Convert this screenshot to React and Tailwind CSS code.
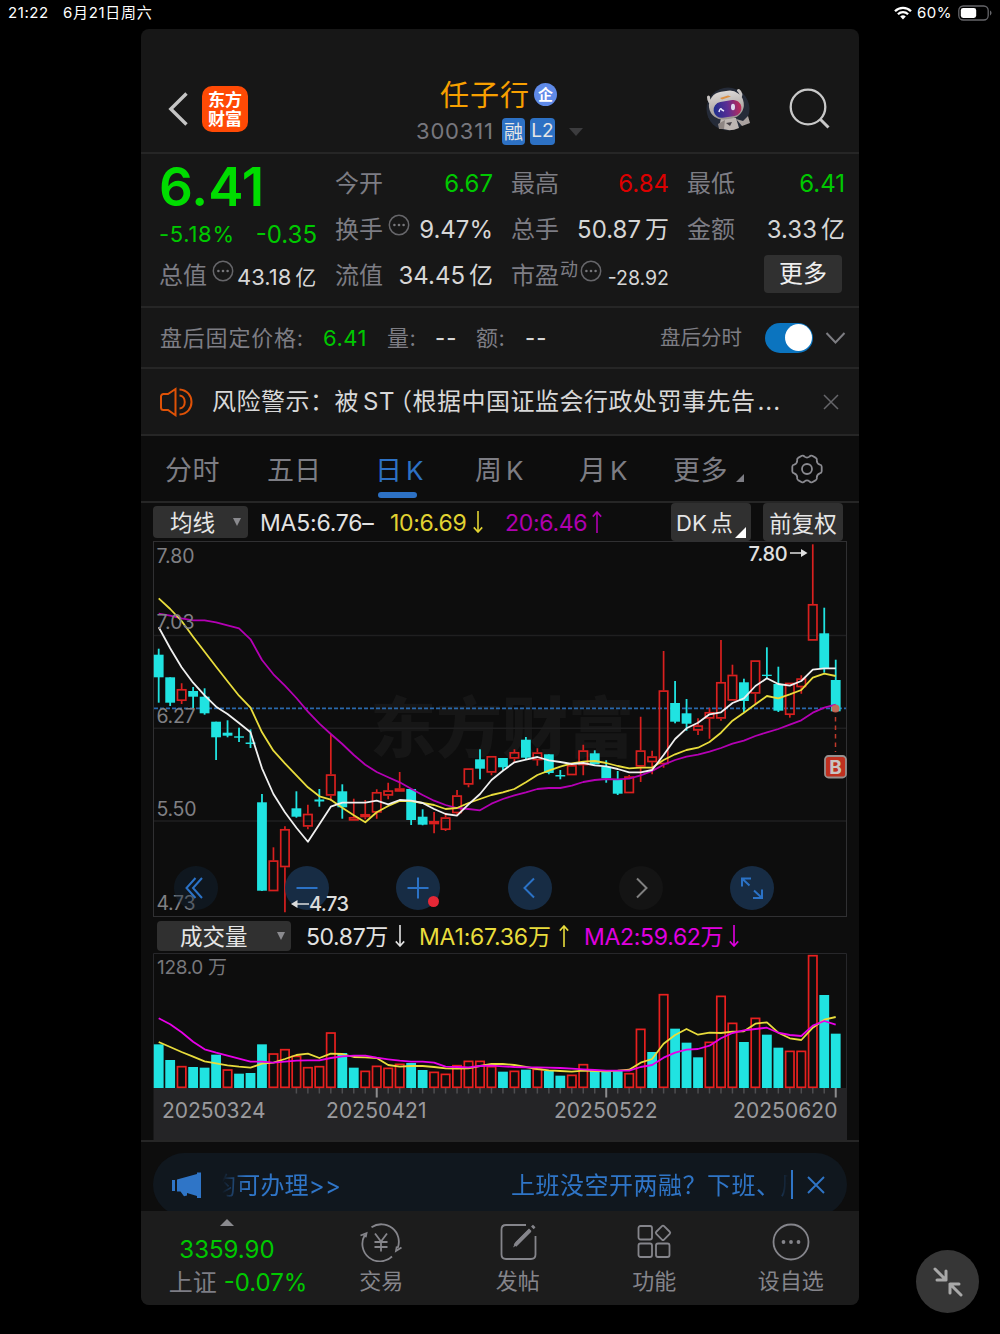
import clsx from "clsx";

const STEP = 11.475;
const xAt = (i) => 158.7 + i * STEP;

// [high, bodyTop, bodyBottom, low, rising]
const candles = [
  [648.7, 654.7, 677.3, 702.7, 0], [677.3, 677.3, 702.7, 706, 0], [683.3, 689, 701, 704, 1],
  [687, 691, 696.7, 708, 0], [688.3, 696.7, 713.3, 714.7, 0], [721.7, 721.7, 737.3, 760, 0],
  [720.3, 732.7, 735.7, 737.3, 0], [727.7, 736.3, 737.7, 742, 0], [729.3, 742.5, 744, 748, 0],
  [794, 802.3, 890.7, 891, 0], [847.3, 860.3, 891.3, 891.3, 1], [826.3, 829, 867.3, 912.3, 1],
  [791.3, 808.3, 816.7, 817.7, 0], [804.7, 813.7, 826.7, 829.3, 1], [789, 799.5, 801.5, 806.7, 0],
  [734.3, 774.3, 795.7, 801, 1], [784.3, 791.3, 807.3, 818.7, 0], [798.7, 817, 820.7, 820.7, 1],
  [800, 814, 817.3, 819.3, 1], [789.3, 792, 812.7, 818.7, 1], [782.7, 790.3, 795.7, 799.3, 1],
  [772, 788.3, 791.7, 791.7, 1], [789, 789, 820, 825, 0], [809.3, 816.7, 824.7, 825.3, 0],
  [812, 821, 824.3, 833.3, 1], [812.7, 817.3, 830, 831, 1], [790, 795.3, 813.3, 815.7, 1],
  [768.3, 768.3, 784.7, 787.3, 1], [749.3, 759.3, 768.7, 779.3, 0], [756, 756, 772.7, 775.3, 1],
  [758, 758, 767.3, 770, 0], [749.3, 752, 758.7, 762.7, 1], [737, 739.7, 757.7, 759.3, 0],
  [748.3, 752.3, 760.3, 765.7, 1], [754.3, 754.3, 773, 774.3, 0], [770, 775, 776.5, 779.3, 0],
  [765, 765, 775.3, 775.3, 1], [744.7, 750.3, 765.3, 775.3, 1], [750.3, 753.3, 764.3, 764.3, 0],
  [760.3, 766.7, 778.3, 782.7, 0], [771, 779.7, 793.7, 795, 0], [775, 776.3, 793.3, 793.3, 1],
  [716.7, 750.3, 766.7, 782, 1], [750.7, 756.3, 762.3, 774.3, 1], [651, 690.3, 764.3, 767.7, 1],
  [681, 703, 721.7, 723.3, 0], [699, 713.3, 723.7, 730.7, 0], [718.3, 725.3, 730.7, 735, 1],
  [707.7, 712, 718.7, 738.7, 1], [640, 682, 718.7, 720.7, 1], [664.7, 674.7, 700.7, 700.7, 1],
  [678.7, 682.3, 701, 712, 0], [660.3, 660.3, 693.7, 705, 1], [647.3, 674.7, 676, 678.7, 0],
  [666.7, 684, 710.7, 712, 0], [682.7, 682.7, 715, 717.7, 1], [675.3, 678.3, 687.3, 693.7, 1],
  [544.3, 604, 640.7, 640.7, 1], [607.7, 633.3, 668.7, 672.7, 0], [659.7, 680, 711.3, 711.3, 0],
];

const ma5 = [627.3, 648.3, 667.3, 682.7, 695.3, 706.7, 714, 723, 732.3, 768.3, 794, 812.3, 827.7, 841.7, 824.3, 806.7, 802.7, 802.7, 802.7, 800.7, 804.3, 800, 800.7, 803, 809, 814, 815.7, 804.3, 794, 780, 770.7, 762.3, 759.7, 757, 760.3, 762, 764, 763, 765.3, 766.3, 769, 772.3, 772.3, 770, 755, 739, 728.3, 722.7, 714.3, 712.3, 703, 698.3, 686, 678.3, 684, 685.7, 681, 669.7, 668.3, 668.3];
const ma10 = [598.3, 609, 621, 636.7, 651.7, 666.7, 681.3, 695.7, 707.7, 732.3, 750.7, 763.3, 775.3, 787.3, 796.3, 799.7, 807.7, 815.3, 822.3, 812.3, 806, 801, 801, 803, 805, 809, 808, 803, 799, 795, 792.3, 789, 782.3, 775, 770.7, 766.7, 763.3, 761.7, 761, 763, 766, 768.3, 767.7, 767.7, 760, 754.3, 750, 747.7, 742, 732.7, 720.7, 712.7, 704.3, 696, 698.3, 694.3, 690, 677.7, 673.7, 676];
const ma20 = [613.7, 615.7, 618.3, 620.3, 620.3, 622.3, 625.3, 628.3, 639.3, 660, 674.3, 685.7, 698, 711.7, 723.7, 734, 744, 755, 764.7, 772, 777.3, 782.3, 788.7, 795, 800.7, 805, 808, 809, 810.3, 803.7, 799, 795.3, 792.3, 789, 788, 788, 785.7, 782, 780, 779, 779.3, 778.7, 775.3, 771, 764.7, 760, 756.7, 754.7, 751.7, 748, 743.7, 740.7, 736, 732.3, 729, 724.7, 720.3, 712.7, 707.7, 704.7];

// bar heights, thirds of a pixel; negative means a falling day
const volumes = [-131, -84, 66, -63, -61, -100, 56, -43, -45, -131, 104, 117, 97, 63, 66, 167, -105, -61, 52, 67, 61, 73, -75, -54, 49, 43, 69, 82, 82, 66, -49, 52, -55, 58, -51, -37, 40, 72, -51, -51, -51, 45, 178, -108, 282, -178, -136, -92, 139, 277, 196, -138, 211, -160, -121, 112, 112, 399, -279, -163];
const volMa1 = [138, 123, 108, 94, 80, 74, 68, 64, 61, 73, 76, 87, 99, 103, 90, 103, 102, 93, 92, 90, 69, 64, 66, 66, 63, 59, 58, 59, 66, 72, 72, 69, 63, 57, 53, 51, 49, 52, 51, 50, 52, 55, 76, 87, 133, 159, 177, 160, 166, 165, 169, 170, 193, 197, 166, 149, 144, 181, 205, 213];
const volMa2 = [209, 191, 167, 139, 116, 106, 97, 88, 79, 79, 76, 79, 82, 83, 83, 90, 95, 97, 97, 91, 86, 82, 79, 79, 76, 64, 63, 62, 66, 67, 65, 63, 62, 62, 61, 60, 58, 56, 54, 52, 52, 52, 63, 69, 91, 106, 115, 117, 127, 149, 165, 173, 177, 181, 166, 159, 156, 187, 201, 190];

const points = (ys) => ys.map((y, i) => `${xAt(i).toFixed(1)},${y.toFixed(1)}`).join(" ");
const volPoints = (vs) => points(vs.map((v) => 1088 - v / 3));

const RED = "#d9201f";
const CYAN = "#20e3e1";

function Dots() {
  return (
    <svg className="h-[22px] w-[22px] shrink-0" viewBox="0 0 22 22" fill="none">
      <circle cx="11" cy="11" r="9.7" stroke="#66666a" strokeWidth="1.5" />
      <g fill="#77777b"><circle cx="6.4" cy="11" r="1.3" /><circle cx="11" cy="11" r="1.3" /><circle cx="15.6" cy="11" r="1.3" /></g>
    </svg>
  );
}

function Arrow({ up, className }) {
  return (
    <svg className={clsx("h-[22px] w-[10px] shrink-0", up && "rotate-180", className)} viewBox="0 0 10 22" fill="none" stroke="currentColor" strokeWidth="1.6">
      <path d="M5 0V21M.8 16.4 5 21l4.2-4.6" />
    </svg>
  );
}

function StatusBar() {
  return (
    <div className="flex h-[29px] items-start pl-[8px] pr-[8px] pt-[3px] text-[15px] leading-5 text-white">
      <span className="w-[55px] tracking-[0.6px]">21:22</span>
      <span className="tracking-[0.7px]">6月21日周六</span>
      <svg className="ml-auto mt-[3px] h-[14px] w-[18px]" viewBox="0 0 18 14" fill="none" stroke="#fff" strokeWidth="2.3">
        <path d="M1 5.2a11.4 11.4 0 0 1 16 0M3.9 8.2a7.3 7.3 0 0 1 10.2 0" />
        <path d="M9 13.4 6.2 10.5a4 4 0 0 1 5.6 0Z" fill="#fff" stroke="none" />
      </svg>
      <span className="ml-[5px] w-[36px] tracking-[0.5px]">60%</span>
      <svg className="ml-[5px] mt-[2px] h-[16px] w-[34px]" viewBox="0 0 34 16">
        <rect x=".8" y="1" width="29.4" height="14" rx="4.5" fill="none" stroke="#66666a" strokeWidth="1.3" />
        <rect x="2.8" y="3" width="15.4" height="10" rx="2.4" fill="#fff" />
        <path d="M32 5.6c2 .8 2 4 0 4.8z" fill="#66666a" />
      </svg>
    </div>
  );
}

function Robot() {
  return (
    <svg className="h-[46px] w-[46px]" viewBox="0 0 46 46">
      <defs>
        <linearGradient id="visor" x1="0" y1="0" x2="1" y2="0">
          <stop offset="0" stopColor="#1c2f8e" /><stop offset=".5" stopColor="#5a2d94" /><stop offset="1" stopColor="#c02a55" />
        </linearGradient>
        <linearGradient id="shell" x1="0" y1="0" x2="0" y2="1">
          <stop offset="0" stopColor="#dcd8d6" /><stop offset="1" stopColor="#98928f" />
        </linearGradient>
      </defs>
      <circle cx="23" cy="23" r="21.500" fill="#252b38" />
      <path d="M3.500 11c0 4 2 6 5 6M33.500 4.500c2.500 2 3 5 1 8" stroke="#c9c5c3" strokeWidth="3" fill="none" strokeLinecap="round" />
      <path d="M16 32h15l3 10q-11 5-20-1z" fill="#bdb6b3" />
      <path d="m31 33 7 2 5-5 2 7-8 3z" fill="#aaa29f" />
      <path d="M13 38l7-4-1 9h-5z" fill="#8d8583" />
      <rect x="4" y="5" width="35" height="28" rx="14" fill="url(#shell)" transform="rotate(-8 22 20)" />
      <path d="m15 12 8-2.500 3 1-9 3z" fill="#dd8f41" />
      <rect x="8.500" y="15" width="28" height="16" rx="8" fill="url(#visor)" transform="rotate(-9 22 23)" />
      <path d="M14 26q1-5 3-2l2 1" stroke="#e8e8ff" strokeWidth="1.500" fill="none" />
      <ellipse cx="28" cy="21" rx="2" ry="3.300" fill="#ddd9ee" />
      <path d="M21 37l6-1-2 4z" fill="#454047" />
    </svg>
  );
}

function Header() {
  return (
    <header className="flex h-[125px] items-end border-b-2 border-[#262626] pb-[3px]">
      <div className="flex h-[80px] w-[251px] items-center pl-[27px]">
        <svg className="h-[36px] w-[20px]" viewBox="0 0 20 36" fill="none" stroke="#c4c4c4" strokeWidth="3.4">
          <path d="M18.500 2.500 2.800 18l15.700 15.500" />
        </svg>
        <div className="ml-[14px] flex h-[46px] w-[46px] flex-col items-center justify-center rounded-[10px] bg-[#ff4a05] pt-[2px] text-[17px] font-bold leading-[19px] text-white">
          <span>东方</span>
          <span>财富</span>
        </div>
      </div>
      <div className="flex h-[74px] flex-1 flex-col">
        <div className="flex h-[39px] items-center pl-[48px]">
          <span className="mt-[3px] text-[29px] leading-10 tracking-[1px] text-[#f8a000]">任子行</span>
          <span className="ml-[4px] flex h-[23px] w-[23px] items-center justify-center rounded-full bg-[#5f8ae8] text-[15px] font-bold leading-5 text-white">企</span>
        </div>
        <div className="flex h-[38px] items-center pl-[24px] text-[22px] text-[#77777e]">
          <span className="w-[86px] tracking-[0.8px]">300311</span>
          <span className="flex h-[27px] w-[23px] items-center justify-center rounded-[4px] bg-[#2d71c4] pt-[3px] text-[19px] text-[#e6e6e6]">融</span>
          <span className="ml-[5px] flex h-[27px] w-[25px] items-center justify-center rounded-[4px] bg-[#2d71c4] text-[19px] text-[#e6e6e6]">L2</span>
          <span className="ml-[14px] border-x-[7px] border-t-[8px] border-x-transparent border-t-[#3c3c3e]" />
        </div>
      </div>
      <div className="flex h-[80px] w-[154px] items-center">
        <Robot />
        <svg className="ml-[38px] h-[42px] w-[42px]" viewBox="0 0 42 42" fill="none" stroke="#c8c8c8" strokeWidth="2.300">
          <circle cx="19" cy="19" r="17.300" /><path d="m31 31 8.500 8.500" strokeWidth="3" />
        </svg>
      </div>
    </header>
  );
}

function Cell({ label, value, color = "text-[#d6d6d6]", children }) {
  return (
    <div className="flex h-[46px] items-center justify-between whitespace-nowrap">
      <span className="flex items-center text-[#7d7d84]">{label}{children}</span>
      <span className={color}>{value}</span>
    </div>
  );
}

function Quote() {
  return (
    <section className="grid h-[154px] grid-cols-4 gap-x-[18px] border-b-2 border-[#262626] pl-[18px] pr-[14px] pt-[7px] text-[24px]">
      <div className="whitespace-nowrap">
        <div className="h-[53px] text-[53px] font-semibold leading-[53px] text-[#00dc00]">6.41</div>
        <div className="flex h-[41px] items-center justify-between text-[#00c800]">
          <span className="text-[22px] tracking-[0.7px]">-5.18%</span>
          <span>-0.35</span>
        </div>
        <div className="-mt-[2px] flex h-[46px] items-center text-[#7d7d84]">
          总值
          <span className="-mt-[10px] ml-[5px] mr-[3px]"><Dots /></span>
          <span className="mt-[3px] text-[22px] text-[#d6d6d6]">43.18<span className="ml-[4px] text-[21px]">亿</span></span>
        </div>
      </div>
      <div>
        <Cell label="今开" value="6.67" color="text-[#00c800]" />
        <Cell label="换手" value="9.47%"><span className="-mt-[10px] ml-[5px]"><Dots /></span></Cell>
        <Cell label="流值" value={<>34.45<span className="ml-[4px]">亿</span></>} />
      </div>
      <div>
        <Cell label="最高" value="6.84" color="text-[#dc0000]" />
        <Cell label="总手" value={<>50.87<span className="ml-[4px]">万</span></>} />
        <Cell label="市盈" value="-28.92" color="mt-[6px] text-[19.500px] text-[#d6d6d6]">
          <span className="-mt-[14px] ml-[1px] text-[18px]">动</span>
          <span className="-mt-[10px] ml-[2px]"><Dots /></span>
        </Cell>
      </div>
      <div>
        <Cell label="最低" value="6.41" color="text-[#00c800]" />
        <Cell label="金额" value={<>3.33<span className="ml-[4px]">亿</span></>} />
        <div className="flex h-[42px] items-center justify-end pr-[3px]">
          <button className="h-[38px] w-[78px] rounded-[4px] bg-[#303030] leading-[38px] text-[#efefef]">更多</button>
        </div>
      </div>
    </section>
  );
}

function AfterHours() {
  return (
    <section className="flex h-[61px] items-center border-b-2 border-[#262626] pl-[19px] text-[22px] text-[#7d7d84]">
      <span className="mt-[2px] w-[163px] tracking-[0.800px]">盘后固定价格:</span>
      <span className="mt-[2px] w-[64px] tracking-[0.500px] text-[#00c800]">6.41</span>
      <span className="mt-[2px] w-[48px] tracking-[0.500px]">量:</span>
      <span className="mt-[2px] w-[41px] font-medium tracking-[1px] text-[#d6d6d6]">--</span>
      <span className="mt-[2px] w-[49px] tracking-[0.500px]">额:</span>
      <span className="mt-[2px] font-medium tracking-[1px] text-[#d6d6d6]">--</span>
      <span className="ml-auto mt-[2px] text-[20.500px]">盘后分时</span>
      <span className="ml-[23px] flex h-[30px] w-[48px] justify-end rounded-full bg-[#0b74bf] p-[1.500px]">
        <span className="h-[27px] w-[27px] rounded-full bg-white" />
      </span>
      <svg className="ml-[12px] mr-[13px] h-[14px] w-[21px]" viewBox="0 0 21 14" fill="none" stroke="#7d7d82" strokeWidth="2">
        <path d="m1.500 2 9 9.500 9-9.500" />
      </svg>
    </section>
  );
}

function Alert() {
  return (
    <section className="flex h-[67px] items-center border-b-2 border-[#262626] pl-[18px] text-[24px] text-[#d8d8d8]">
      <svg className="h-[30px] w-[34px]" viewBox="0 0 34 30" fill="none" stroke="#df5207" strokeWidth="2">
        <path d="M16.500 2 9 7H4.500a2.500 2.500 0 0 0-2.500 2.500v11A2.500 2.500 0 0 0 4.500 23H9l7.500 5.200zM20.500 8.500c7 .5 7 12.500 0 13M20.500 2.500c16 1 16 24 0 25" />
      </svg>
      <span className="ml-[19px] whitespace-nowrap tracking-[0.500px]">风险警示：被<span className="ml-[4px]">ST</span><span className="-ml-[7px]">（</span>根据中国证监会行政处罚事先告<span className="ml-[2px] tracking-[1px]">...</span></span>
      <svg className="ml-auto mr-[20px] h-[16px] w-[16px]" viewBox="0 0 16 16" stroke="#66666a" strokeWidth="1.500">
        <path d="m1 1 14 14M15 1 1 15" />
      </svg>
    </section>
  );
}

function Tabs() {
  return (
    <nav className="flex h-[67px] border-b-2 border-[#262626] pl-[24px] text-[27px] leading-[69px] text-[#7d7d84]">
      <span className="w-[102px] tracking-[0.500px]">分时</span>
      <span className="w-[108px]">五日</span>
      <span className="relative w-[100px] text-[#2d71c4]">
        日<span className="ml-[4px] text-[26px]">K</span>
        <i className="absolute bottom-[3px] left-[3px] h-[6px] w-[39px] rounded-full bg-[#2d71c4]" />
      </span>
      <span className="w-[104px]">周<span className="ml-[4px] text-[26px]">K</span></span>
      <span className="w-[94px]">月<span className="ml-[4px] text-[26px]">K</span></span>
      <span className="tracking-[0.500px]">更多</span>
      <i className="ml-[8px] mt-[38px] h-0 w-0 border-b-[8px] border-l-[8px] border-b-[#7d7d84] border-l-transparent" />
      <svg className="ml-[47px] mt-[17px] h-[32px] w-[32px]" viewBox="0 0 32 32" fill="none" stroke="#8a8a90" strokeWidth="1.800" strokeLinejoin="round">
        <path d="M10.800 2.800q1.600-.7 2.700.8 2.500 1.900 5 0 1.100-1.500 2.700-.8l3.700 2.100q1.400.9.900 2.600 0 3 3 4.200 1.900.3 1.900 2v4.600q0 1.700-1.900 2-3 1.200-3 4.200.5 1.700-.9 2.600l-3.700 2.100q-1.600.7-2.700-.8-2.500-1.900-5 0-1.100 1.500-2.700.8l-3.700-2.100q-1.400-.9-.9-2.600 0-3-3-4.200-1.900-.3-1.900-2v-4.600q0-1.700 1.900-2 3-1.200 3-4.200-.5-1.700.9-2.600z" />
        <circle cx="16" cy="16" r="5" />
      </svg>
    </nav>
  );
}

function Legend() {
  return (
    <div className="flex h-[38px] items-center pl-[12px] text-[23px]">
      <button className="flex h-[32px] w-[95px] items-center rounded-[4px] bg-[#303030] pl-[17px] text-[22.500px] text-[#e6e6e6]">
        <span className="mt-[2px]">均线</span>
        <i className="ml-[18px] border-x-[4.500px] border-t-[8px] border-x-transparent border-t-[#8a8a8e]" />
      </button>
      <span className="ml-[12px] mt-[2px] w-[130px] tracking-[-0.200px] text-[#e2e2e2]">MA5:6.76–</span>
      <span className="mt-[2px] w-[83px] tracking-[-0.300px] text-[#e2d332]">10:6.69</span>
      <Arrow className="text-[#e2d332]" />
      <span className="ml-[22px] mt-[2px] w-[87px] tracking-[-0.300px] text-[#b000b0]">20:6.46</span>
      <Arrow up className="text-[#b000b0]" />
      <button className="relative ml-auto h-full w-[80px] rounded-[4px] bg-[#303030] pl-[5px] pt-[3px] text-left text-[22px] text-[#e6e6e6]">
        DK<span className="ml-[4px]">点</span>
        <i className="absolute bottom-[3px] right-[5px] border-b-[11px] border-l-[11px] border-b-white border-l-transparent" />
      </button>
      <button className="ml-[12px] mr-[16px] h-full w-[80px] rounded-[4px] bg-[#303030] pt-[3px] text-[22.500px] text-[#e6e6e6]">前复权</button>
    </div>
  );
}

function ControlButton({ dim, children }) {
  return (
    <button className={clsx("flex h-[44px] w-[44px] items-center justify-center rounded-full", dim || "bg-[#18304a]/90")}>
      <svg className="h-[26px] w-[26px]" viewBox="0 0 26 26" fill="none" stroke="#2b72c6" strokeWidth="2">{children}</svg>
    </button>
  );
}

function PriceChart() {
  return (
    <div className="relative ml-[12px] h-[376px] w-[694px]">
      <svg className="block h-[376px] w-[694px]" viewBox="153 541 694 376">
        <text x="502" y="752" textAnchor="middle" fontSize="66" fontWeight="900" fill="#161616">东方财富</text>
        <g stroke="#1f1f20" strokeWidth="1.500">
          <path d="M154 635.500H846M154 728.300H846M154 821H846" />
        </g>
        <rect x="153.500" y="541.500" width="693" height="375" fill="none" stroke="#303032" />
        <path d="M154 708.300H846" stroke="#2968ac" strokeWidth="1.700" strokeDasharray="4 2" />
        {candles.map(([high, top, bottom, low, rising], i) => {
          const x = xAt(i);
          return rising ? (
            <g key={i} stroke={RED} strokeWidth="1.700" fill="none">
              <path d={`M${x} ${high}V${top}M${x} ${bottom}V${low}`} />
              <rect x={x - 4.200} y={top + 0.800} width="8.400" height={Math.max(bottom - top - 1.600, 1)} />
            </g>
          ) : (
            <g key={i} fill={CYAN}>
              <rect x={x - 0.900} y={high} width="1.800" height={low - high} />
              <rect x={x - 4.900} y={top} width="9.800" height={bottom - top} />
            </g>
          );
        })}
        <g fill="none" strokeWidth="1.800" strokeLinejoin="round">
          <polyline points={points(ma20)} stroke="#b400b4" />
          <polyline points={points(ma10)} stroke="#e8dc3c" />
          <polyline points={points(ma5)} stroke="#f0f0f0" />
        </g>
        <g fill="#808084" fontSize="19.500">
          <text x="156.500" y="563" textLength="38">7.80</text>
          <text x="156.500" y="629" textLength="38">7.03</text>
          <text x="156.500" y="722.500" textLength="39">6.27</text>
          <text x="156.500" y="816" textLength="40">5.50</text>
          <text x="156.500" y="910" textLength="39">4.73</text>
        </g>
        <path d="M835.500 717V752" stroke="#c0392b" strokeWidth="1.500" strokeDasharray="4.500 4" />
        <circle cx="835.500" cy="708.500" r="4" fill="#d0604c" opacity=".9" />
        <rect x="825" y="756" width="21" height="21.500" rx="3.500" fill="#c0301f" stroke="#96908f" strokeWidth="1.800" />
        <text x="835.500" y="773.800" textAnchor="middle" fontSize="19" fontWeight="700" fill="#c9c3c2">B</text>
        <g fill="#e0e0e0" fontSize="20" fontWeight="500" letterSpacing="-.2">
          <text x="748.500" y="561" textLength="39">7.80</text>
          <path d="M790 552.300h11v-3.300l6.500 4-6.500 4v-3.300h-11z" />
        </g>
      </svg>
      <div className="absolute left-[21px] top-[325px] flex gap-[67.200px]">
        <span className="rounded-full bg-[#13283d]/40">
          <ControlButton dim><path d="m15 3-9 10 9 10M21.500 3l-9 10 9 10" transform="translate(-2.500)" /></ControlButton>
        </span>
        <ControlButton><path d="M2.500 13h21" /></ControlButton>
        <div className="relative h-[44px]">
          <ControlButton><path d="M2.500 13h21M13 2.500v21" /></ControlButton>
          <i className="absolute bottom-[3px] right-[1px] h-[11px] w-[11px] rounded-full bg-[#e62836]" />
        </div>
        <ControlButton><path d="m17 3.500-9.500 9.500 9.500 9.500" /></ControlButton>
        <span className="rounded-full bg-[#141414] text-[#808080]">
          <ControlButton dim><path d="m9 3.500 9.500 9.500L9 22.500" stroke="currentColor" /></ControlButton>
        </span>
        <ControlButton><path d="M3 11.500V3.500h9M3 3.500l7.500 7M23 14.500v8.500h-9M23 23l-8-7.500" /></ControlButton>
      </div>
      {/* lowest price marker sits above the round buttons */}
      <div className="absolute left-[138px] top-[351px] flex items-center text-[20px] font-medium leading-6 tracking-[-0.600px] text-[#dcdcdc]">
        <svg className="h-[10px] w-[18px]" viewBox="0 0 18 10" fill="currentColor"><path d="M0 5l6.500-4v3.200H18v1.600H6.500V9z" /></svg>
        4.73
      </div>
    </div>
  );
}

function VolumeLegend() {
  return (
    <div className="flex h-[36px] items-center pl-[16px] pt-[2px] text-[23px] whitespace-nowrap">
      <button className="flex h-[30px] w-[134px] items-center rounded-[4px] bg-[#303030] pl-[23px] text-[22.500px] text-[#e6e6e6]">
        <span className="mt-[2px]">成交量</span>
        <i className="ml-[29px] border-x-[4.500px] border-t-[8px] border-x-transparent border-t-[#8a8a8e]" />
      </button>
      <span className="ml-[15px] mt-[2px] w-[89px] tracking-[-0.400px] text-[#e2e2e2]">50.87万</span>
      <Arrow className="text-[#e2e2e2]" />
      <span className="ml-[14px] mt-[2px] w-[140px] tracking-[-0.200px] text-[#e8dc3c]">MA1:67.36万</span>
      <Arrow up className="text-[#e8dc3c]" />
      <span className="ml-[15px] mt-[2px] w-[145px] tracking-[-0.300px] text-[#e000e0]">MA2:59.62万</span>
      <Arrow className="text-[#e000e0]" />
    </div>
  );
}

function VolumeChart() {
  return (
    <svg className="ml-[12px] block h-[187px] w-[694px]" viewBox="153 953 694 187">
      <path d="M153.500 1088V953.500h693V1088" fill="none" stroke="#27272a" />
      <rect x="153.500" y="1088" width="693.500" height="52" fill="#242426" />
      <text x="157" y="974" fontSize="19" textLength="70" fill="#77777b">128.0 万</text>
      {volumes.map((v, i) => {
        const h = Math.abs(v) / 3;
        return v > 0 ? (
          <rect key={i} x={xAt(i) - 4.200} y={1088.700 - h} width="8.400" height={h - 1.400} fill="none" stroke="#e8201f" strokeWidth="1.700" />
        ) : (
          <rect key={i} x={xAt(i) - 4.900} y={1088 - h} width="9.800" height={h} fill={CYAN} />
        );
      })}
      <g fill="none" strokeWidth="1.800" strokeLinejoin="round">
        <polyline points={volPoints(volMa1)} stroke="#e8dc3c" />
        <polyline points={volPoints(volMa2)} stroke="#e800e8" />
      </g>
      {candles.map((_, i) => {
        if (i < 12) return null;
        const major = i % 20 === 19;
        return <path key={i} d={`M${xAt(i)} 1088v${major ? 9.500 : 5.500}`} stroke={major ? "#8c8c8e" : "#4e4e50"} strokeWidth={major ? 2 : 1.500} />;
      })}
      <g fill="#9a9a9d" fontSize="21" letterSpacing=".5">
        <text x="162" y="1118" textLength="104">20250324</text>
        <text x="326" y="1118" textLength="101">20250421</text>
        <text x="554" y="1118" textLength="104">20250522</text>
        <text x="733" y="1118" textLength="105">20250620</text>
      </g>
    </svg>
  );
}

function Banner() {
  return (
    <div className="h-[71px] overflow-hidden border-t-2 border-[#262626] px-[12px] pt-[11px] text-[#2f75c7]">
      <div className="flex h-[63px] items-center rounded-full bg-[#10171e] pl-[18px] text-[24px]">
        <svg className="h-[28px] w-[32px]" viewBox="0 0 32 28" fill="currentColor">
          <path d="M1 9h3v11H1zM6 8.500 26 3V1.500h4V27h-4v-2l-10-3v2.500l-3 .8L9.500 20.500H6z" />
        </svg>
        <div className="ml-[19px] mt-[2px] flex w-[566px] overflow-hidden whitespace-nowrap mask-[linear-gradient(to_right,transparent,black_24px,black_545px,transparent)]">
          <span className="-ml-[10px] w-[299px] shrink-0 tracking-[0.200px]">均可办理&gt;&gt;</span>
          <span className="tracking-[0.500px]">上班没空开两融？下班、周末</span>
        </div>
        <i className="ml-[3px] h-[29px] w-[1.500px] bg-[#2f75c7]" />
        <svg className="ml-[14px] h-[18px] w-[18px]" viewBox="0 0 18 18" stroke="currentColor" strokeWidth="1.900">
          <path d="m1 1 16 16M17 1 1 17" />
        </svg>
      </div>
    </div>
  );
}

function NavItem({ label, children }) {
  return (
    <div className="flex w-[136.500px] flex-col items-center pt-[11px] text-[22px] leading-[34px] text-[#85858b]">
      <svg className="mb-[2px] h-[40px] w-[44px]" viewBox="0 0 44 40" fill="none" stroke="currentColor" strokeWidth="1.800">{children}</svg>
      {label}
    </div>
  );
}

function BottomNav() {
  return (
    <footer className="flex h-[94px] rounded-b-[8px] bg-[#1c1c1c]">
      <div className="flex w-[172px] flex-col items-center pt-[8px] text-[24px] text-[#00c800]">
        <i className="border-x-[7px] border-b-[7px] border-x-transparent border-b-[#8a8a8e]" />
        <span className="mt-[8px] leading-8">3359.90</span>
        <span className="ml-[22px] mt-[1px] whitespace-nowrap leading-8"><span className="mr-[7px] text-[#7d7d84]">上证</span>-0.07%</span>
      </div>
      <NavItem label="交易">
        <path d="M12.500 5.300A17.500 17.500 0 0 1 38.700 26M33 34.500A17.500 17.500 0 0 1 5.800 13M1.500 13.500l6-2.300-.8 4M42.500 25.500l-5.500 3.500.8-4.500M16 11.500l6 8 6-8M22 19.500v10M15.500 20h13M15.500 25h13" />
      </NavItem>
      <NavItem label="发帖">
        <path d="M30 3H10q-4.500 0-4.500 4.500v25Q5.500 37 10 37h25q4.500 0 4.500-4.500V14" />
        <path d="M17 25.500 19.500 20 33 6.500l2.500 2.500L22 22.500zM35 4.500l2-1.800 2.500 2.500-1.800 2z" fill="currentColor" stroke="none" />
        <path d="m19 23.500 15-15" strokeWidth="3.500" />
      </NavItem>
      <NavItem label="功能">
        <rect x="6.500" y="4" width="13.500" height="13.500" rx="2" /><rect x="6.500" y="21.500" width="13.500" height="13.500" rx="2" /><rect x="24" y="21.500" width="13.500" height="13.500" rx="2" />
        <rect x="25.500" y="5.300" width="11" height="11" rx="1.500" transform="rotate(45 31 10.800)" />
      </NavItem>
      <NavItem label="设自选">
        <circle cx="22" cy="20" r="17.500" />
        <g fill="currentColor" stroke="none"><circle cx="14.500" cy="20" r="1.900" /><circle cx="22" cy="20" r="1.900" /><circle cx="29.500" cy="20" r="1.900" /></g>
      </NavItem>
    </footer>
  );
}

export default function App() {
  return (
    <div className="relative h-[1334px] w-[1000px] overflow-hidden bg-black font-['Inter','Noto_Sans_CJK_SC',sans-serif]">
      <StatusBar />
      <main className="ml-[141px] flex w-[718px] flex-col overflow-hidden rounded-[8px] bg-[#171717]">
        <Header />
        <Quote />
        <AfterHours />
        <Alert />
        <div className="bg-[#0d0d0d]">
          <Tabs />
          <Legend />
          <PriceChart />
          <VolumeLegend />
          <VolumeChart />
          <Banner />
        </div>
        <BottomNav />
      </main>
      <button className="absolute left-[916px] top-[1250px] flex h-[63px] w-[63px] items-center justify-center rounded-full bg-[#363636]">
        <svg className="h-[32px] w-[32px]" viewBox="0 0 32 32" fill="none" stroke="#a8a8a8" strokeWidth="3" strokeLinecap="round" strokeLinejoin="round">
          <path d="m3 3 11 11M14 5v9H5M29 29 18 18M18 27v-9h9" />
        </svg>
      </button>
    </div>
  );
}
